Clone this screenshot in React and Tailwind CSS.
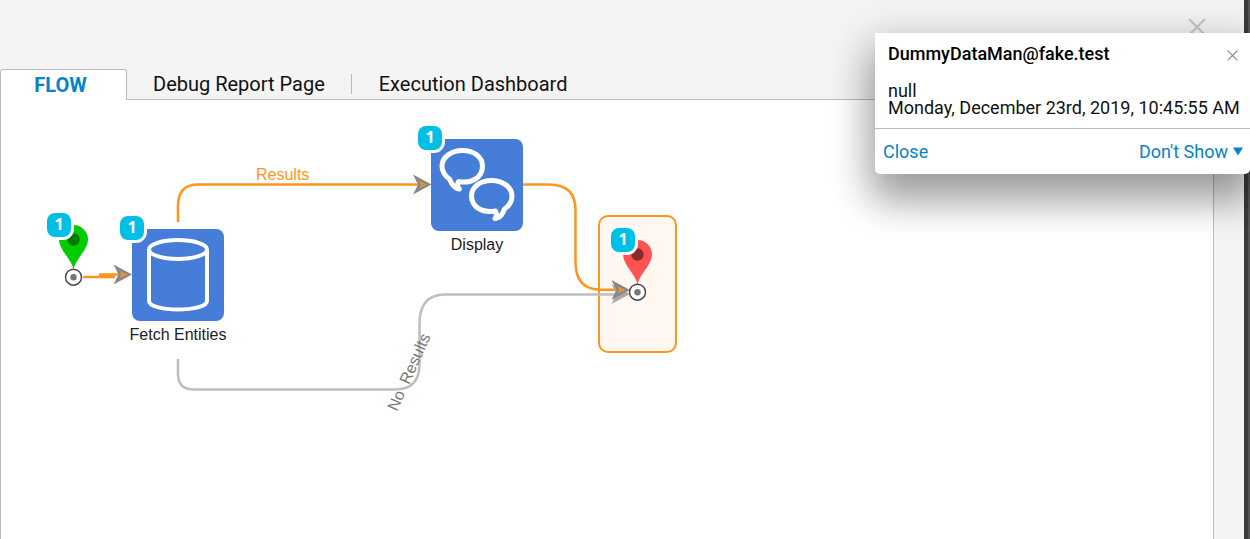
const TABS = [
  { id: 'debug', label: 'Debug Report Page' },
  { id: 'execution', label: 'Execution Dashboard' },
];

export default function App() {
  return (
    <div className="flex h-screen overflow-hidden bg-[#f4f4f4] font-['Roboto',sans-serif] text-[#111]">
      <main className="flex min-w-0 flex-1 flex-col pr-[30px]">
        <div className="flex justify-end pt-[18px] pr-2">
          <button type="button" aria-label="Close page" className="block">
            <CrossIcon className="h-[18px] w-[18px] text-[#c4c4c4]" strokeWidth="2" />
          </button>
        </div>

        {/* Tabs */}
        <nav className="mt-[33px] flex h-[31px] items-stretch text-xl leading-[30px]">
          <button type="button" className="w-[127px] rounded-t-[3px] border border-b-0 border-[#bbb] bg-white pr-[6px] font-bold text-[#0584c6]">
            FLOW
          </button>
          <div className="flex flex-1 items-center border-b border-[#bbb]">
            {TABS.map((tab, i) => (
              <button
                key={tab.id}
                type="button"
                className={i === 0 ? 'px-[26px]' : 'h-5 border-l border-[#bbb] px-[27px] leading-5'}
              >
                {tab.label}
              </button>
            ))}
          </div>
        </nav>

        <FlowCanvas />
      </main>

      {/* Edge of the window behind */}
      <div className="w-[6px] border-r-2 border-[#555] bg-[#3a3a3a]" />

      <Notification />
    </div>
  );
}

function Notification() {
  return (
    <section className="absolute top-[33px] right-0 w-[375px] rounded-b-[5px] bg-white text-lg leading-[17px] shadow-[0_24px_38px_3px_rgba(0,0,0,0.32),0_9px_46px_8px_rgba(0,0,0,0.12)]">
      <div className="flex items-center justify-between pt-3 pr-3 pl-[13px]">
        <h2 className="font-medium text-black">DummyDataMan@fake.test</h2>
        <button type="button" aria-label="Dismiss">
          <CrossIcon className="mt-[3px] h-[11px] w-[11px] text-[#888]" strokeWidth="2" />
        </button>
      </div>
      <div className="border-b border-[#bbb] px-[13px] pt-5 pb-3">
        <p>null</p>
        <p className="whitespace-nowrap">Monday, December 23rd, 2019, 10:45:55 AM</p>
      </div>
      <div className="flex h-[45px] items-center justify-between pr-[7px] pl-2 text-[#0584c6]">
        <button type="button">Close</button>
        <button type="button" className="flex items-center gap-[5px]">
          Don't Show
          <svg className="h-[9px] w-[10px]" viewBox="0 0 10 9" fill="currentColor">
            <path d="M0 0.5H10L5 8.5Z" />
          </svg>
        </button>
      </div>
    </section>
  );
}

function FlowCanvas() {
  return (
    <div className="relative flex-1 overflow-hidden border-x border-[#bbb] bg-white font-['Liberation_Sans',Arial,sans-serif] text-base">
      {/* Selected end step */}
      <div className="absolute top-[115px] left-[597px] h-[138px] w-[79px] rounded-[10px] border-2 border-[#ff951f] bg-[#fff7f0]" />

      <Edges />

      <Node name="Fetch Entities" className="left-[131px] top-[129px]">
        <DatabaseIcon />
      </Node>
      <Node name="Display" className="left-[430px] top-[39px]">
        <ChatIcon />
      </Node>

      <Pin className="left-[57px] top-[124px] text-[#00cc00]" dot="#007a00" />
      <Pin className="left-[621px] top-[139px] text-[#ff5252]" dot="#8a2a2a" />

      <Badge className="left-[43px] top-[110px]" />
      <Badge className="left-[116px] top-[113px]" />
      <Badge className="left-[414px] top-[23px]" />
      <Badge className="left-[607px] top-[125px]" />
    </div>
  );
}

function Edges() {
  return (
    <svg className="absolute top-0 left-0 h-[439px] w-[720px]" viewBox="0 0 720 439" fill="none">
      <g strokeWidth="2.5">
        <path stroke="#bfbfbf" d="M177 259V274Q177 289.5 193 289.5H394C411 289.5 418.500 280 418.500 264V224C418.500 204 427 194.500 444 194.500H618" />
        <path stroke="#ff951f" d="M177 122V106Q177 84.500 197 84.500H418" />
        <path stroke="#ff951f" d="M522 84.500H548C566 84.500 574.500 93 574.500 110V162C574.500 181 583 189.700 600 189.700H615" />
        <path stroke="#ff951f" d="M82 177H114M98 174.500H121" />
      </g>
      <g fill="#aaa">
        <ArrowHead x={629} y={194} />
      </g>
      <g fill="#888">
        <ArrowHead x={131} y={174.5} inner />
        <ArrowHead x={430.5} y={84.5} inner />
        <ArrowHead x={629} y={190} inner />
      </g>
      <text x="255" y="80" fill="#ff951f">Results</text>
      <text transform="translate(396 312) rotate(-66)" fill="#777">No{'\u00a0\u00a0'}Results</text>
    </svg>
  );
}

function ArrowHead({ x, y, inner }) {
  return (
    <g transform={`translate(${x} ${y})`}>
      <path d="M0 0L-18.500-10L-13.500 0L-18.500 10Z" />
      {inner && <path stroke="#ff951f" strokeWidth="1.2" d="M-11-2L-6 0L-11 2L-10 0Z" />}
    </g>
  );
}

function Node({ name, className, children }) {
  return (
    <div className={`absolute flex w-[92px] flex-col items-center ${className}`}>
      <div className="h-[92px] w-full rounded-lg bg-[#467dd8]">{children}</div>
      <span className="mt-1 whitespace-nowrap leading-5 text-[#222]">{name}</span>
    </div>
  );
}

function Badge({ className }) {
  return (
    <span className={`absolute h-[30px] w-[30px] rounded-[11px] border-3 border-white bg-[#00bfe6] text-center font-['Open_Sans',sans-serif] font-bold leading-[22px] text-white ${className}`}>
      1
    </span>
  );
}

function Pin({ className, dot }) {
  return (
    <svg className={`absolute h-[64px] w-[32px] ${className}`} viewBox="0 0 32 64" fill="none">
      <path fill="currentColor" d="M15.500 46C14.500 36 1 26 1 15.500A14.500 14.500 0 0 1 30 15.500C30 26 16.500 36 15.500 46Z" />
      <circle cx="15.500" cy="15.500" r="6.200" fill={dot} />
      <circle cx="15.500" cy="53.200" r="8" fill="#fff" stroke="#444" strokeWidth="1.400" />
      <circle cx="15.500" cy="53.200" r="3.200" fill="#777" />
    </svg>
  );
}

function DatabaseIcon() {
  return (
    <svg className="h-full w-full" viewBox="0 0 92 92" fill="none" stroke="#fff" strokeWidth="4">
      <ellipse cx="46" cy="20.500" rx="29" ry="9.500" />
      <path d="M17 20.500V72C17 77 29.500 80.500 46 80.500S75 77 75 72V20.500" />
    </svg>
  );
}

function ChatIcon() {
  return (
    <svg className="h-full w-full" viewBox="0 0 92 92" fill="none" stroke="#fff" strokeWidth="5" strokeLinejoin="round">
      <path d="M28.500 50C26.500 48.500 26 46 27.500 42.500C41.500 45 51.500 38 51.500 27C51.500 17.500 42.500 11.500 31.500 11.500S11 18 11 27C11 33 14 37 18.500 40C20.500 45 23 49.500 28.500 50Z" />
      <path d="M64 79.500C65.500 78 66 75.500 64.500 72C50.500 74.500 40.500 67.500 40.500 57C40.500 47.500 49.500 41.500 60.500 41.500S81 48 81 57C81 63 78 67 73.500 70C71.500 75 69.500 79 64 79.500Z" />
    </svg>
  );
}

function CrossIcon({ className, strokeWidth }) {
  return (
    <svg className={className} viewBox="0 0 18 18" fill="none" stroke="currentColor" strokeWidth={strokeWidth}>
      <path d="M1 1L17 17M17 1L1 17" />
    </svg>
  );
}
